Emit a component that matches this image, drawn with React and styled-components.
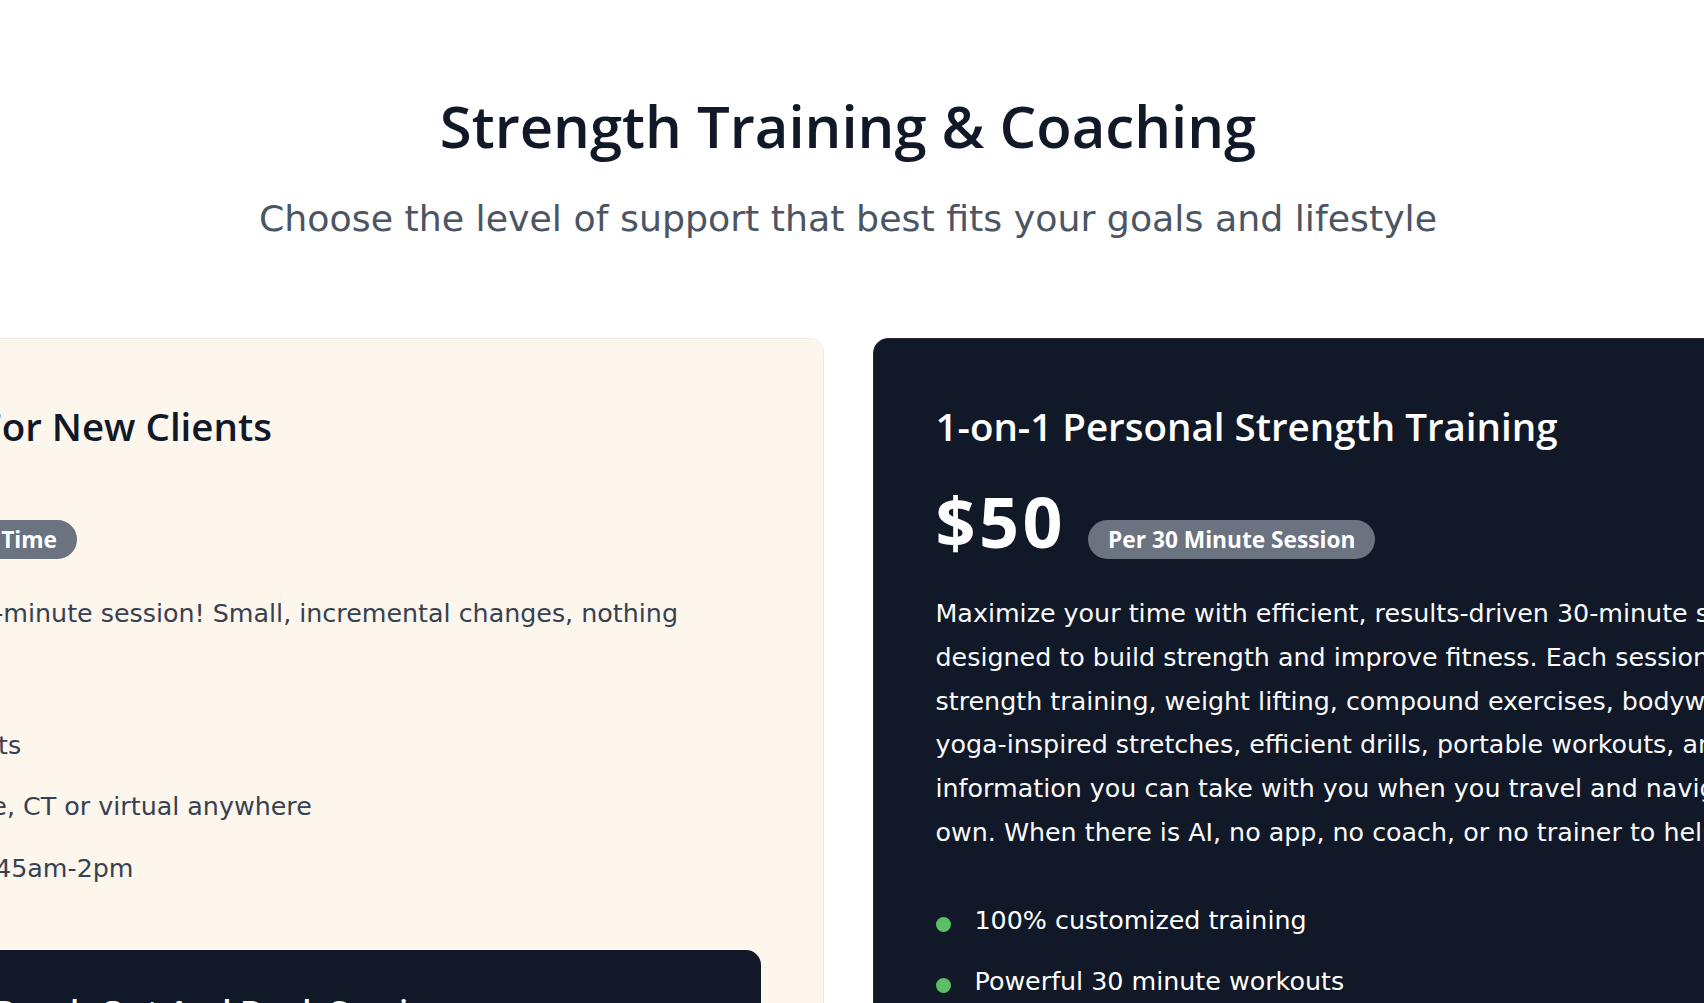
import React from "react";
import styled, { createGlobalStyle } from "styled-components";

const GlobalStyle = createGlobalStyle`
  html, body {
    margin: 0;
    padding: 0;
    background: #ffffff;
    overflow: hidden;
  }
  body {
    font-family: "DejaVu Sans", "Open Sans", sans-serif;
  }
  *, *::before, *::after { box-sizing: border-box; }
`;

const Page = styled.main`
  display: flex;
  flex-direction: column;
  align-items: center;
  padding: 91px 8px 80px 0;
  overflow: hidden;
`;

const Title = styled.h1`
  margin: 0;
  font-family: "Open Sans", sans-serif;
  font-weight: 600;
  font-size: 58px;
  line-height: 69.6px;
  color: #111827;
  text-align: center;
`;

const Subtitle = styled.p`
  margin: 33px 0 0;
  font-family: "DejaVu Sans", sans-serif;
  font-size: 36.3px;
  line-height: 50.4px;
  color: #4b5563;
  text-align: center;
`;

const Plans = styled.section`
  display: flex;
  justify-content: center;
  align-items: stretch;
  gap: 49px;
  width: 100%;
  margin-top: 94px;
`;

const Card = styled.article`
  flex: 0 0 1080px;
  display: flex;
  flex-direction: column;
  padding: 64px 62px 62px;
  border-radius: 15px;
  border: 1px solid ${(p) => (p.$dark ? "#1f2937" : "#efe9e2")};
  background: ${(p) => (p.$dark ? "#111827" : "#fdf6ec")};
  color: ${(p) => (p.$dark ? "#ffffff" : "#111827")};
`;

const PlanName = styled.h2`
  margin: 0 0 34px;
  font-family: "Open Sans", sans-serif;
  font-weight: 600;
  font-size: 38.5px;
  line-height: 46px;
  white-space: nowrap;
`;

const PriceRow = styled.div`
  display: flex;
  align-items: flex-end;
  gap: 22px;
`;

const Price = styled.span`
  font-family: "Open Sans", sans-serif;
  font-weight: 700;
  font-size: 70px;
  line-height: 76px;
  letter-spacing: 3.5px;
`;

const Badge = styled.span`
  display: inline-block;
  padding: 5px 20px;
  border-radius: 999px;
  background: #6b7280;
  color: #ffffff;
  font-family: "Open Sans", sans-serif;
  font-weight: 700;
  font-size: 22.7px;
  line-height: 29px;
  white-space: nowrap;
`;

const Description = styled.p`
  margin: 33px 0 0;
  font-size: 25.35px;
  line-height: 43.75px;
  color: ${(p) => (p.$dark ? "#f9fafb" : "#374151")};
`;

const Features = styled.ul`
  list-style: none;
  margin: 44px 0 0;
  padding: 0;
  display: flex;
  flex-direction: column;
  gap: 18px;
`;

const Feature = styled.li`
  display: flex;
  align-items: flex-start;
  gap: 24px;
  font-size: 25.35px;
  line-height: 43.75px;
  white-space: nowrap;
  color: ${(p) => (p.$dark ? "#ffffff" : "#374151")};
`;

const Dot = styled.span`
  flex: 0 0 15px;
  width: 15px;
  height: 15px;
  margin-top: 18px;
  border-radius: 50%;
  background: #5cbf66;
`;

const Cta = styled.div`
  display: flex;
  align-items: flex-start;
  gap: 64px;
  margin-top: 59px;
  padding: 41px 40px 40px;
  border-radius: 15px;
  background: ${(p) => (p.$dark ? "#ffffff" : "#111827")};
  color: ${(p) => (p.$dark ? "#111827" : "#ffffff")};
`;

const CtaIcon = styled.svg`
  flex: 0 0 84px;
  width: 84px;
  height: 84px;
`;

const CtaBody = styled.div`
  display: flex;
  flex-direction: column;
  gap: 12px;
`;

const CtaTitle = styled.h3`
  margin: 0;
  font-family: "Open Sans", sans-serif;
  font-weight: 600;
  font-size: 33px;
  line-height: 41.6px;
`;

const CtaText = styled.p`
  margin: 0;
  font-size: 22px;
  line-height: 36px;
  opacity: 0.85;
`;

const plans = [
  {
    dark: false,
    name: "Kickstart For New Clients",
    price: "$0",
    unit: "Extra Time",
    text:
      "Start with a 30-minute session! Small, incremental changes, nothing drastic.",
    features: [
      "Visible results",
      "In East Lyme, CT or virtual anywhere",
      "Mon-Wed 8:45am-2pm",
    ],
  },
  {
    dark: true,
    name: "1-on-1 Personal Strength Training",
    price: "$50",
    unit: "Per 30 Minute Session",
    text:
      "Maximize your time with efficient, results-driven 30-minute sessions designed to build strength and improve fitness. Each session includes strength training, weight lifting, compound exercises, bodyweight work, yoga-inspired stretches, efficient drills, portable workouts, and practical information you can take with you when you travel and navigate on your own. When there is AI, no app, no coach, or no trainer to help you.",
    features: [
      "100% customized training",
      "Powerful 30 minute workouts",
      "In East Lyme, CT or virtual anywhere",
      "Mon-Wed 8:45am-2pm",
    ],
  },
];

function CalendarIcon() {
  return (
    <CtaIcon viewBox="0 0 24 24" fill="none" stroke="currentColor" strokeWidth="1.6" strokeLinecap="round" strokeLinejoin="round">
      <rect x="3" y="4.5" width="18" height="16" rx="2" />
      <path d="M3 9.5h18M8 2.5v4M16 2.5v4M9 15l2 2 4-4" />
    </CtaIcon>
  );
}

export default function App() {
  return (
    <>
      <GlobalStyle />
      <Page>
        <Title>Strength Training &amp; Coaching</Title>
        <Subtitle>
          Choose the level of support that best fits your goals and lifestyle
        </Subtitle>
        <Plans>
          {plans.map((plan) => (
            <Card key={plan.name} $dark={plan.dark}>
              <PlanName>{plan.name}</PlanName>
              <PriceRow>
                <Price>{plan.price}</Price>
                <Badge>{plan.unit}</Badge>
              </PriceRow>
              <Description $dark={plan.dark}>{plan.text}</Description>
              <Features>
                {plan.features.map((f) => (
                  <Feature key={f} $dark={plan.dark}>
                    <Dot />
                    <span>{f}</span>
                  </Feature>
                ))}
              </Features>
              <Cta $dark={plan.dark}>
                <CalendarIcon />
                <CtaBody>
                  <CtaTitle>Reach Out And Book Session</CtaTitle>
                  <CtaText>Send a message to find a time that works for you.</CtaText>
                </CtaBody>
              </Cta>
            </Card>
          ))}
        </Plans>
      </Page>
    </>
  );
}
